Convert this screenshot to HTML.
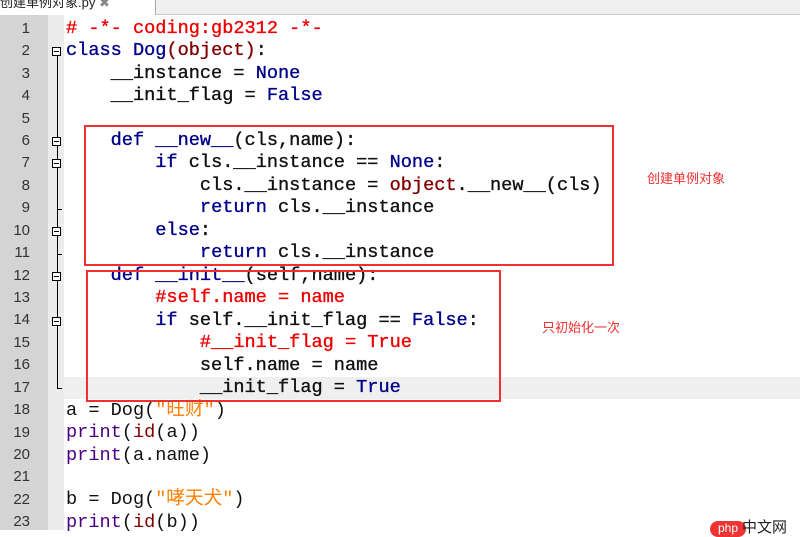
<!DOCTYPE html>
<html><head><meta charset="utf-8"><style>
*{margin:0;padding:0}
body{width:800px;height:530px;overflow:hidden;background:#fff;position:relative;font-family:"Liberation Mono",monospace}
.tabbar{position:absolute;left:0;top:0;width:800px;height:14px;background:#f0f0f0;border-bottom:1px solid #ccc}
.tab{position:absolute;left:0;top:0;width:155px;height:15px;background:#fff;border-right:1px solid #aaa;font:13px "Liberation Sans","Noto Sans CJK SC",sans-serif;line-height:6px;overflow:hidden;white-space:nowrap;color:#222}
.gut{position:absolute;left:0;top:15px;width:48px;height:515px;background:#d4d4d4}
.fold{position:absolute;left:48px;top:15px;width:16px;height:515px;background:#ececec}
.hl{position:absolute;left:64px;top:377px;width:736px;height:22px;background:#efefef}
.ln{position:absolute;left:0;width:30px;text-align:right;font:15px "Liberation Sans",sans-serif;color:#333;line-height:20px}
.c{position:absolute;left:66px;font-size:18.6px;line-height:22px;white-space:pre;color:#111;font-weight:normal;-webkit-text-stroke:0.35px currentColor;font-family:"Liberation Mono","Noto Sans CJK SC",monospace}
.k{color:#00008b}.r{color:#e00}.o{color:#800000}.b{color:#4b0082}.s{color:#ff7f00}
.box{position:absolute;border:2px solid #f03030}
.note{position:absolute;font:13px "Liberation Sans","Noto Sans CJK SC",sans-serif;color:#f03030}
.vl{position:absolute;left:57px;width:1px;background:#000}
.fb{position:absolute;left:52px;width:9px;height:9px;border:1px solid #000;background:#fff;box-sizing:border-box}
.fb:after{content:"";position:absolute;left:1px;top:3px;width:5px;height:1px;background:#000}
.tk{position:absolute;left:57px;width:5px;height:1px;background:#000}
</style></head><body>
<div class="tabbar"></div>
<div class="tab">创建单例对象.py <span style="color:#888">✖</span></div>
<div class="gut"></div><div class="fold"></div>
<div class="hl"></div>
<div class="vl" style="top:56px;height:332px"></div>
<div class="fb" style="top:47px"></div>
<div class="fb" style="top:137px"></div>
<div class="fb" style="top:159px"></div>
<div class="fb" style="top:227px"></div>
<div class="fb" style="top:272px"></div>
<div class="fb" style="top:317px"></div>
<div class="tk" style="top:209px"></div>
<div class="tk" style="top:254px"></div>
<div class="tk" style="top:388px"></div>

<div class="ln" style="top:19px">1</div><div class="ln" style="top:41px">2</div><div class="ln" style="top:64px">3</div><div class="ln" style="top:86px">4</div><div class="ln" style="top:109px">5</div><div class="ln" style="top:131px">6</div><div class="ln" style="top:153px">7</div><div class="ln" style="top:176px">8</div><div class="ln" style="top:198px">9</div><div class="ln" style="top:221px">10</div><div class="ln" style="top:243px">11</div><div class="ln" style="top:266px">12</div><div class="ln" style="top:288px">13</div><div class="ln" style="top:310px">14</div><div class="ln" style="top:333px">15</div><div class="ln" style="top:355px">16</div><div class="ln" style="top:378px">17</div><div class="ln" style="top:400px">18</div><div class="ln" style="top:423px">19</div><div class="ln" style="top:445px">20</div><div class="ln" style="top:467px">21</div><div class="ln" style="top:490px">22</div><div class="ln" style="top:512px">23</div>

<div class="c r" style="top:18px"># -*- coding:gb2312 -*-</div>
<div class="c" style="top:40px"><span class="k">class Dog</span><span class="o">(object)</span>:</div>
<div class="c" style="top:63px">    __instance = <span class="k">None</span></div>
<div class="c" style="top:85px">    __init_flag = <span class="k">False</span></div>
<div class="c" style="top:130px">    <span class="k">def __new__</span>(cls,name):</div>
<div class="c" style="top:152px">        <span class="k">if</span> cls.__instance == <span class="k">None</span>:</div>
<div class="c" style="top:175px">            cls.__instance = <span class="o">object</span>.__new__(cls)</div>
<div class="c" style="top:197px">            <span class="k">return</span> cls.__instance</div>
<div class="c" style="top:220px">        <span class="k">else</span>:</div>
<div class="c" style="top:242px">            <span class="k">return</span> cls.__instance</div>
<div class="c" style="top:265px">    <span class="k">def __init__</span>(self,name):</div>
<div class="c r" style="top:287px">        #self.name = name</div>
<div class="c" style="top:310px">        <span class="k">if</span> self.__init_flag == <span class="k">False</span>:</div>
<div class="c r" style="top:332px">            #__init_flag = True</div>
<div class="c" style="top:355px">            self.name = name</div>
<div class="c" style="top:377px">            __init_flag = <span class="k">True</span></div>
<div class="c" style="top:400px;-webkit-text-stroke:0">a = Dog(<span class="s">"旺财"</span>)</div>
<div class="c" style="top:422px;-webkit-text-stroke:0"><span class="b">print</span>(<span class="o">id</span>(a))</div>
<div class="c" style="top:445px;-webkit-text-stroke:0"><span class="b">print</span>(a.name)</div>
<div class="c" style="top:489px;-webkit-text-stroke:0">b = Dog(<span class="s">"哮天犬"</span>)</div>
<div class="c" style="top:512px;-webkit-text-stroke:0"><span class="b">print</span>(<span class="o">id</span>(b))</div>

<div class="box" style="left:84px;top:125px;width:526px;height:137px"></div>
<div class="box" style="left:86px;top:270px;width:411px;height:128px"></div>
<div class="note" style="left:647px;top:168px">创建单例对象</div>
<div class="note" style="left:542px;top:317px">只初始化一次</div>
<div style="position:absolute;left:710px;top:521px;width:36px;height:16px;border-radius:8px;background:#e33;color:#fff;font:12px 'Liberation Sans',sans-serif;text-align:center">php</div>
<div style="position:absolute;left:742px;top:516px;font:15px 'Liberation Sans','Noto Sans CJK SC',sans-serif;color:#222">中文网</div>
</body></html>
